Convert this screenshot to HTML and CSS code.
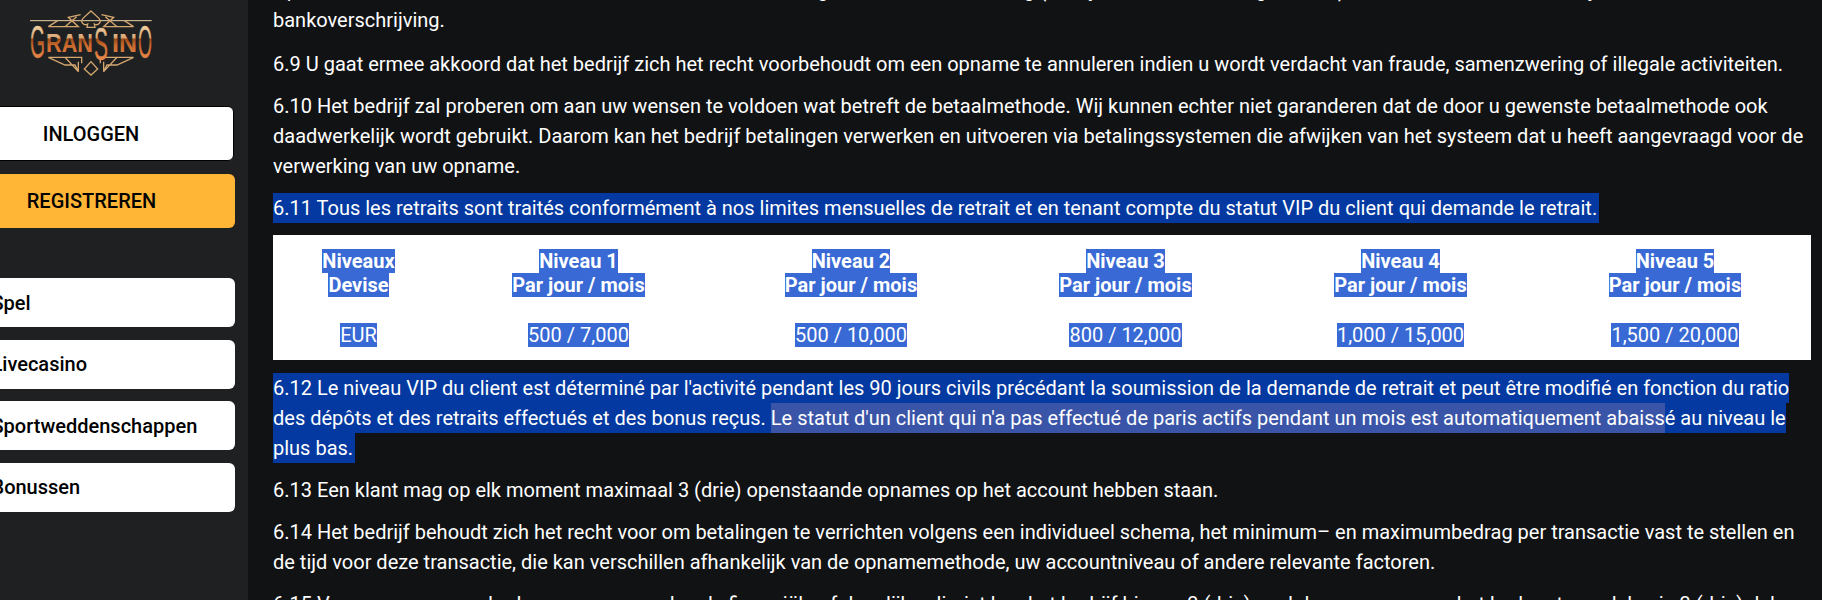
FILE: index.html
```html
<!DOCTYPE html>
<html lang="nl">
<head>
<meta charset="utf-8">
<title>Gransino</title>
<link rel="stylesheet" href="styles.css">
</head>
<body>
<div class="layout">
  <aside class="sidebar">
    <a class="logo" href="#" aria-label="Gransino">
      <svg width="124" height="68" viewBox="0 0 124 68" fill="none">
        <defs>
          <linearGradient id="gold" x1="0" y1="17" x2="0" y2="52" gradientUnits="userSpaceOnUse">
            <stop offset="0" stop-color="#f0d2a6"/>
            <stop offset="0.37" stop-color="#d8a672"/>
            <stop offset="0.4" stop-color="#9a4a18"/>
            <stop offset="0.57" stop-color="#c8682c"/>
            <stop offset="1" stop-color="#ea8a4c"/>
          </linearGradient>
        </defs>
        <g transform="translate(-14 2) scale(.3333)" stroke="#d4a670" stroke-width="4">
          <path d="M45 32H410" stroke="#ecd0a6" stroke-width="3"/>
          <path d="M228 3L252 25C262 38 248 48 238 42L240 52H216L218 42C208 48 194 38 204 25Z"/>
          <path d="M100 50H190L160 22L197 14M128 32L100 50M150 50L185 20"/>
          <path d="M356 50H266L296 22L259 14M328 32L356 50M306 50L271 20"/>
          <path d="M100 142H200V160M100 142L150 165H180L190 185V155M150 142L190 185"/>
          <path d="M356 142H256V160M356 142L306 165H276L266 185V155M306 142L266 185"/>
          <path d="M228 155L248 177L228 195L208 177Z"/>
        </g>
        <g class="logo-text" fill="url(#gold)">
          <text class="logo-big" x="1" y="50" textLength="15" lengthAdjust="spacingAndGlyphs">G</text>
          <text class="logo-small" x="17" y="44" textLength="47" lengthAdjust="spacingAndGlyphs">RAN</text>
          <text class="logo-big" x="65" y="52" textLength="14" lengthAdjust="spacingAndGlyphs">S</text>
          <text class="logo-small" x="83" y="44" textLength="25" lengthAdjust="spacingAndGlyphs">IN</text>
          <text class="logo-big" x="109" y="50" textLength="14" lengthAdjust="spacingAndGlyphs">O</text>
        </g>
      </svg>
    </a>
    <div class="actions">
      <a class="btn btn-login" href="#">INLOGGEN</a>
      <a class="btn btn-register" href="#">REGISTREREN</a>
    </div>
    <nav class="nav">
      <a class="nav-item" href="#">Spel</a>
      <a class="nav-item" href="#">Livecasino</a>
      <a class="nav-item" href="#">Sportweddenschappen</a>
      <a class="nav-item" href="#">Bonussen</a>
    </nav>
  </aside>
  <main class="content">
    <div class="article">
      <p class="lead">Opnames worden verwerkt via dezelfde betaalmethode die is gebruikt voor de storting (tenzij anders is overeengekomen) of naar keuze van het bedrijf via een<br>bankoverschrijving.</p>
      <p>6.9 U gaat ermee akkoord dat het bedrijf zich het recht voorbehoudt om een opname te annuleren indien u wordt verdacht van fraude, samenzwering of illegale activiteiten.</p>
      <p>6.10 Het bedrijf zal proberen om aan uw wensen te voldoen wat betreft de betaalmethode. Wij kunnen echter niet garanderen dat de door u gewenste betaalmethode ook daadwerkelijk wordt gebruikt. Daarom kan het bedrijf betalingen verwerken en uitvoeren via betalingssystemen die afwijken van het systeem dat u heeft aangevraagd voor de verwerking van uw opname.</p>
      <p><span class="sel">6.11 Tous les retraits sont traités conformément à nos limites mensuelles de retrait et en tenant compte du statut VIP du client qui demande le retrait.</span></p>
      <table class="limits">
        <thead>
          <tr>
            <th><span class="sel-light">Niveaux </span><br><span class="sel-light">Devise </span></th>
            <th><span class="sel-light">Niveau 1 </span><br><span class="sel-light">Par jour / mois </span></th>
            <th><span class="sel-light">Niveau 2 </span><br><span class="sel-light">Par jour / mois </span></th>
            <th><span class="sel-light">Niveau 3 </span><br><span class="sel-light">Par jour / mois </span></th>
            <th><span class="sel-light">Niveau 4 </span><br><span class="sel-light">Par jour / mois </span></th>
            <th><span class="sel-light">Niveau 5 </span><br><span class="sel-light">Par jour / mois </span></th>
          </tr>
        </thead>
        <tbody>
          <tr>
            <td><span class="sel-light">EUR </span></td>
            <td><span class="sel-light">500 / 7,000 </span></td>
            <td><span class="sel-light">500 / 10,000 </span></td>
            <td><span class="sel-light">800 / 12,000 </span></td>
            <td><span class="sel-light">1,000 / 15,000 </span></td>
            <td><span class="sel-light">1,500 / 20,000 </span></td>
          </tr>
        </tbody>
      </table>
      <p><span class="sel">6.12 Le niveau VIP du client est déterminé par l'activité pendant les 90 jours civils précédant la soumission de la demande de retrait et peut être modifié en fonction du ratio des dépôts et des retraits effectués et des bonus reçus. <span class="sel-soft">Le statut d'un client qui n'a pas effectué de paris actifs pendant un mois est automatiquement abaiss</span>é au niveau le plus bas.</span></p>
      <p>6.13 Een klant mag op elk moment maximaal 3 (drie) openstaande opnames op het account hebben staan.</p>
      <p>6.14 Het bedrijf behoudt zich het recht voor om betalingen te verrichten volgens een individueel schema, het minimum– en maximumbedrag per transactie vast te stellen en de tijd voor deze transactie, die kan verschillen afhankelijk van de opnamemethode, uw accountniveau of andere relevante factoren.</p>
      <p>6.15 Voor opnames van bedragen van meer dan de financiële of dagelijkse limiet kan het bedrijf binnen 3 (drie) werkdagen vragen om het bedrag te verdelen in 3 (drie) delen</p>
    </div>
  </main>
</div>
</body>
</html>
```
FILE: styles.css
```css
* { box-sizing: border-box; }
html, body { margin: 0; height: 100%; overflow: hidden; }
body { background: #111214; font-family: Roboto, "Liberation Sans", sans-serif; color: #fff; }
a { text-decoration: none; color: inherit; }

.layout { display: flex; height: 600px; }

.sidebar {
  flex: none;
  width: 248px;
  background: #1f2022;
  padding: 8px 13px 0 0;
  display: flex;
  flex-direction: column;
  overflow: hidden;
}
.logo { display: block; flex: none; width: 124px; height: 68px; margin-left: 29px; }
.logo svg { display: block; }
.logo-text { font-family: "Liberation Sans", sans-serif; }
.logo-big { font-size: 46px; stroke: url(#gold); stroke-width: 0.4; }
.logo-small { font-size: 25px; font-weight: 700; }

.actions { margin-top: 30px; margin-left: -52px; display: flex; flex-direction: column; gap: 13px; }
.btn {
  display: flex;
  align-items: center;
  justify-content: center;
  height: 54px;
  border-radius: 6px;
  font-size: 20px;
  font-weight: 500;
  color: #000;
}
.btn-login { height: 55px; background: #fff; border: 1px solid #000; margin-right: 1px; }
.btn-register { background: #ffb636; }

.nav { margin-top: 50px; margin-left: -52px; display: flex; flex-direction: column; gap: 12.67px; }
.nav-item {
  display: flex;
  align-items: center;
  height: 49px;
  padding-left: 43.5px;
  background: #fff;
  border-radius: 6px;
  color: #000;
  font-size: 20px;
  font-weight: 500;
}

.content { flex: 1; min-width: 0; padding: 0 11px 0 25px; overflow: hidden; }
.article { margin-top: -25px; font-size: 20px; line-height: 30px; }
.article p { margin: 0 0 12px; }
.article .lead { margin-bottom: 14px; }

.sel { background: #0339a0; padding: 3.3px 2px 3.3px 0; }
.sel-soft { background: #3a55a8; padding: 3.3px 0; }
.sel-light { background: #3869d4; color: #fff; }

.limits { width: 100%; table-layout: fixed; background: #fff; border-collapse: collapse; margin: 0 0 13px; line-height: 24px; }
.limits th { padding: 14px 8px 13px; font-weight: 700; text-align: center; }
.limits td { padding: 13px 8px 13px; text-align: center; }
.limits th:nth-child(1) { width: 171px; }
.limits th:nth-child(2) { width: 269px; }
.limits th:nth-child(3) { width: 276px; }
.limits th:nth-child(4) { width: 273px; }
.limits th:nth-child(5) { width: 277px; }
```
